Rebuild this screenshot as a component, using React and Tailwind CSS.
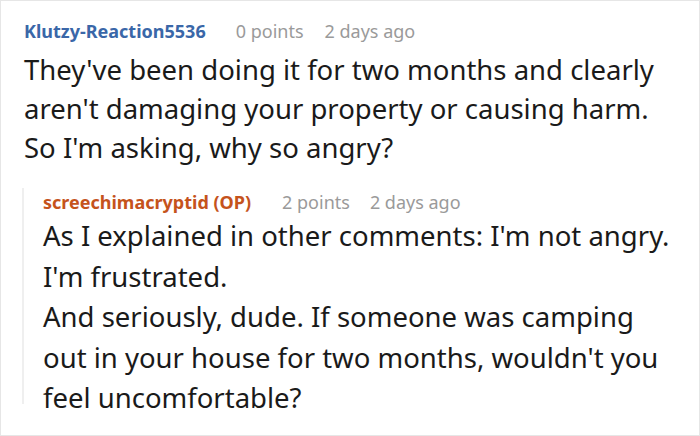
export default function App() {
  const font = { fontFamily: '"Noto Sans", sans-serif' };
  return (
    <div style={font} className="w-[700px] h-[436px] bg-white border border-[#e6e6e6] overflow-hidden">
      <div className="pl-[23px] pt-[16px]">
        <div className="flex items-baseline text-[18px] leading-[28px] whitespace-nowrap">
          <span className="font-bold text-[#3a67a8]">Klutzy-Reaction5536</span>
          <span className="ml-[30px] text-[#9a9a9a]">0 points</span>
          <span className="ml-[21px] text-[#9a9a9a]">2 days ago</span>
        </div>
        <p className="text-[27.5px] leading-[39px] text-[#1a1a1a] mt-[5px] whitespace-nowrap">
          They've been doing it for two months and clearly
          <br />
          aren't damaging your property or causing harm.
          <br />
          So I'm asking, why so angry?
        </p>
      </div>
      <div className="ml-[21px] mt-[32px] border-l-2 border-[#efefef] pl-[19px] h-[216px]">
        <div className="flex items-baseline text-[18px] leading-[28px] -mt-[11px] whitespace-nowrap">
          <span className="font-bold text-[#c5531c]">screechimacryptid (OP)</span>
          <span className="ml-[31px] text-[#9a9a9a]">2 points</span>
          <span className="ml-[20px] text-[#9a9a9a]">2 days ago</span>
        </div>
        <p className="text-[27.5px] leading-[40.5px] text-[#1a1a1a] mt-[0px] whitespace-nowrap">
          As I explained in other comments: I'm not angry.
          <br />
          I'm frustrated.
          <br />
          And seriously, dude. If someone was camping
          <br />
          out in your house for two months, wouldn't you
          <br />
          feel uncomfortable?
        </p>
      </div>
    </div>
  );
}
